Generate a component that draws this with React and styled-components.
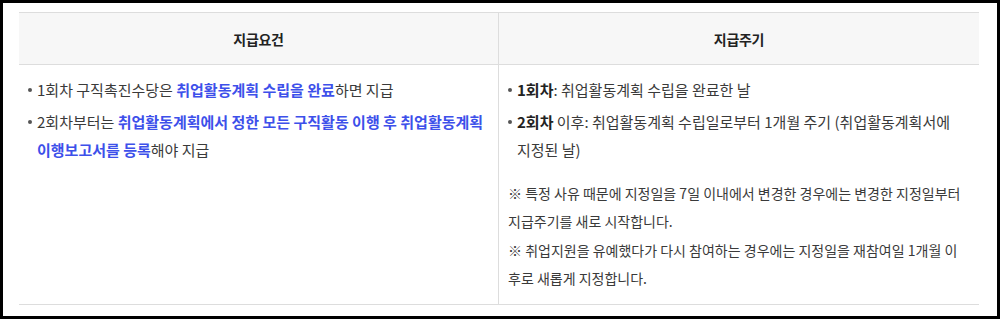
import React from 'react';
import styled, { createGlobalStyle } from 'styled-components';

const GlobalStyle = createGlobalStyle`
    html, body {
        margin: 0;
        padding: 0;
        background: #ffffff;
    }
    body {
        font-family: "Noto Sans CJK KR", "Noto Sans", sans-serif;
        color: #3a3a3a;
    }
`;

const Frame = styled.div`
    box-sizing: border-box;
    width: 1000px;
    height: 319px;
    border: 3px solid #000;
    background: #fff;
    padding: 9px 18px 0 16px;
`;

const Table = styled.div`
    display: grid;
    grid-template-columns: 479px 1px 480px;
    width: 960px;
    border-top: 1px solid #dddddd;
    border-bottom: 1px solid #dddddd;
`;

const HeadCell = styled.div`
    height: 51px;
    display: flex;
    align-items: center;
    justify-content: center;
    background: #f7f7f7;
    border-bottom: 1px solid #dddddd;
    font-size: 14px;
    font-weight: 700;
    color: #222;
    letter-spacing: -0.3px;
`;

const Divider = styled.div`
    background: #dddddd;
`;

const Cell = styled.div`
    padding: 11px ${p => p.$padRight || 2}px 12px 9px;
`;

const List = styled.ul`
    list-style: none;
    margin: 0;
    padding: 0;
`;

const Item = styled.li`
    position: relative;
    padding-left: 9px;
    font-size: 15px;
    line-height: 28px;
    color: #3a3a3a;
    & + & {
        margin-top: 4px;
    }
    &::before {
        content: "";
        position: absolute;
        left: 0;
        top: 12px;
        width: 4px;
        height: 4px;
        border-radius: 50%;
        background: #555;
    }
`;

const Accent = styled.span`
    color: #3d50ea;
    font-weight: 600;
`;

const Strong = styled.b`
    color: #222;
    font-weight: 700;
`;

const Notes = styled.div`
    margin-top: 15px;
    font-size: 14px;
    line-height: 28.3px;
    color: #3a3a3a;
`;

const Note = styled.p`
    margin: 0;
`;

export default function App() {
    return (
        <>
            <GlobalStyle />
            <Frame>
                <Table>
                    <HeadCell>지급요건</HeadCell>
                    <Divider />
                    <HeadCell>지급주기</HeadCell>

                    <Cell>
                        <List>
                            <Item>
                                1회차 구직촉진수당은 <Accent>취업활동계획 수립을 완료</Accent>하면 지급
                            </Item>
                            <Item>
                                2회차부터는 <Accent>취업활동계획에서 정한 모든 구직활동 이행 후 취업활동계획 이행보고서를 등록</Accent>해야 지급
                            </Item>
                        </List>
                    </Cell>
                    <Divider />
                    <Cell $padRight={13}>
                        <List>
                            <Item>
                                <Strong>1회차</Strong>: 취업활동계획 수립을 완료한 날
                            </Item>
                            <Item>
                                <Strong>2회차</Strong> 이후: 취업활동계획 수립일로부터 1개월 주기 (취업활동계획서에 지정된 날)
                            </Item>
                        </List>
                        <Notes>
                            <Note>※ 특정 사유 때문에 지정일을 7일 이내에서 변경한 경우에는 변경한 지정일부터 지급주기를 새로 시작합니다.</Note>
                            <Note>※ 취업지원을 유예했다가 다시 참여하는 경우에는 지정일을 재참여일 1개월 이후로 새롭게 지정합니다.</Note>
                        </Notes>
                    </Cell>
                </Table>
            </Frame>
        </>
    );
}
